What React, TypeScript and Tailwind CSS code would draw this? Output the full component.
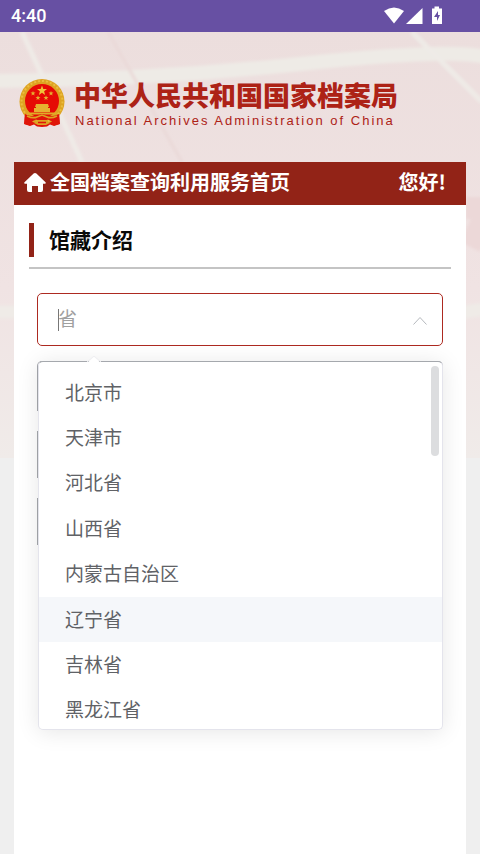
import { useState } from 'react'

const provinces = ['北京市', '天津市', '河北省', '山西省', '内蒙古自治区', '辽宁省', '吉林省', '黑龙江省']

function StatusBar() {
  return (
    <div className="flex h-8 items-center justify-between bg-[#6750a3] pl-[11px] pr-9 text-white">
      <span className="font-[Roboto] text-lg font-medium">4:40</span>
      <svg className="h-5 w-[60px]" viewBox="0 0 60 20" fill="currentColor" aria-hidden="true">
        <path d="M0 5Q10-2 20 5L10 17.500Z" />
        <path d="M38.500 2v16H22Z" />
        <path d="M50.500.500h4.500v2h3V18H48V2.500h2.500Z" />
        <path d="M54 5l-4 6h3v4l3-6h-2Z" fill="#6750a3" />
      </svg>
    </div>
  )
}

function Emblem() {
  return (
    <svg className="h-12 w-[46px] shrink-0" viewBox="0 0 46 48" aria-hidden="true">
      <path d="M6 34h34l1 11-6 2-4-1.500-3 2-5 .500-5-.500-3-2-4 1.500-6-2Z" fill="#e01509" />
      <circle cx="23" cy="22.500" r="22.500" fill="#dea322" />
      <circle cx="23" cy="22.500" r="20.500" fill="none" stroke="#ebbd3e" strokeWidth="2" strokeDasharray="2 2" />
      <circle cx="23" cy="22" r="17" fill="#e60a05" />
      <path d="m23 6.500 1.300 3.500H28l-2.900 2.300 1 3.700-3.100-2.200-3.100 2.200 1-3.700-2.900-2.300h3.700Z" fill="#f0c43a" />
      <g fill="#e6b030">
        <path d="m14 12 .7 1.600h1.800L15 14.800l.6 1.800-1.600-1-1.600 1 .6-1.800-1.500-1.200h1.800Z" />
        <path d="m32 12 .7 1.600h1.800L33 14.800l.6 1.800-1.600-1-1.600 1 .6-1.800-1.500-1.200h1.800Z" />
        <path d="m19 16.500.7 1.600h1.800L20 19.300l.6 1.800-1.600-1-1.600 1 .6-1.800-1.500-1.200h1.800Z" />
        <path d="m27 16.500.7 1.600h1.800L28 19.300l.6 1.800-1.600-1-1.600 1 .6-1.800-1.500-1.200h1.800Z" />
        <path d="M17 25h12l1 3h-1v1h2v4H15v-4h2v-1h-1Z" />
      </g>
      <path d="M8 33.500h30l-1 2H9Z" fill="#e0ac28" />
      <path d="M6 35q6 3 11 2l6-2 6 2q5 1 11-2l.5 10-5.500 1.500-2-4-4-2-6 2-6-2-4 2-2 4L5.500 45Z" fill="#e01509" />
      <path d="M8 37q6 3 10 1l5-2 5 2q4 2 10-1" fill="none" stroke="#dea322" strokeWidth="1.500" />
      <path d="m15 44 4-3h8l4 3-4 2h-8Z" fill="#dea322" />
      <path d="M19 43.500h8" stroke="#e01509" strokeWidth="1.500" />
    </svg>
  )
}

// faint window-frame pattern behind the header
function Backdrop() {
  return (
    <svg className="absolute inset-x-0 top-0 -z-10 h-[426px] w-full" viewBox="0 0 480 426" preserveAspectRatio="none" aria-hidden="true">
      <defs>
        <linearGradient id="sky" x1="0" y1="0" x2="0" y2="1">
          <stop offset="0" stopColor="#ecdedd" />
          <stop offset=".6" stopColor="#f0e3e3" />
          <stop offset="1" stopColor="#f0ebe9" />
        </linearGradient>
        <filter id="soft"><feGaussianBlur stdDeviation="1.500" /></filter>
      </defs>
      <path d="M0 0h480v426H0Z" fill="url(#sky)" />
      <g filter="url(#soft)" fill="none">
        <path d="M-5 49Q150 48 300 32T485 25" stroke="#eeebe6" strokeWidth="14" />
        <path d="m22 0 60 130M412 0l70 70" stroke="#efebe7" strokeWidth="5" />
        <path d="m108 0 74 130" stroke="#ead9d8" strokeWidth="3" />
        <path d="M466 176h20M470 215l14-30" stroke="#ecd8d8" strokeWidth="22" />
        <path d="M460 281l25-4M-5 280h22" stroke="#efebe7" strokeWidth="13" />
      </g>
    </svg>
  )
}

export default function App() {
  const [province, setProvince] = useState('')

  return (
    <div className="flex min-h-screen flex-col bg-[#efefef] font-['Noto_Sans_CJK_SC',sans-serif]">
      <StatusBar />
      <div className="relative isolate flex flex-1 flex-col">
        <Backdrop />
        <header className="flex h-[130px] items-center gap-2 pl-[19px] pt-3">
          <Emblem />
          <div className="pt-1 pl-px text-[#ad2216]">
            <h1 className="text-[27px] leading-8 font-black whitespace-nowrap">中华人民共和国国家档案局</h1>
            <p className="pl-px font-['Liberation_Sans',sans-serif] text-[13px] leading-5 tracking-[2px] whitespace-nowrap">
              National Archives Administration of China
            </p>
          </div>
        </header>

        <main className="mx-3.5 flex-1 bg-white">
          <nav className="flex h-[43px] items-center justify-between bg-[#922317] pl-2.5 pr-5 text-xl leading-6 font-bold text-white">
            <a href="#" className="flex items-center gap-1 pb-1">
              <svg className="mt-0.5 h-5 w-[22px]" viewBox="0 0 22 20" fill="currentColor" aria-hidden="true">
                <path d="M11 0a2 2 0 0 1 1.400.600L21.500 9.300q1 1.200-.7 1.500H19V17q0 2-2 2h-3v-6H8v6H5q-2 0-2-2v-6.200H1.200q-1.700-.3-.7-1.500L9.600.600A2 2 0 0 1 11 0Z" />
              </svg>
              全国档案查询利用服务首页
            </a>
            <span className="pb-1">您好!</span>
          </nav>

          <div className="mx-[15px] flex h-16 items-center gap-[15px] border-b-2 border-[#c4c4c4] pt-2">
            <span className="h-[34px] w-[5px] bg-[#922317]" />
            <h2 className="pb-0.5 text-[21px] leading-8 font-bold text-[#090909]">馆藏介绍</h2>
          </div>

          <div className="relative mx-[23px] mt-6">
            <input
              type="text"
              aria-label="省"
              placeholder="省"
              value={province}
              onChange={(e) => setProvince(e.target.value)}
              className="block h-[53px] w-full rounded-[5px] border border-[#ad2a21] bg-white pr-12 pb-1 pl-5 text-[19px] text-[#606266] outline-none placeholder:text-[#a0a0a0]"
            />
            <span className="absolute top-4 left-[21px] h-[22px] w-px bg-[#777]" />
            <svg className="absolute top-6 right-4 h-2 w-3.5" viewBox="0 0 14 8" fill="none" stroke="#b5b8bd" aria-hidden="true">
              <path d="m.5 7.500 6.500-7 6.500 7" />
            </svg>

            {/* fields under the open list */}
            <div className="mt-[15px] h-[50px] rounded-t-[5px] border border-b-0 border-[#a5a8ad]" />
            <div className="mt-5 h-[47px] border-l border-[#a5a8ad]" />
            <div className="mt-5 h-[47px] border-l border-[#a5a8ad]" />

            <div className="absolute inset-x-0 top-[68px] ml-px h-[369px] rounded-[5px] border border-[#e4e4ec] border-t-[#a5a8ad] bg-white shadow-[0_2px_22px_rgba(0,0,0,0.1)]">
              <svg className="absolute -top-1.5 left-12 h-2 w-3.5" viewBox="0 0 14 8" aria-hidden="true">
                <path d="m0 7 7-6 7 6v1H0Z" fill="#fff" />
                <path d="m0 6 7-6 7 6" fill="none" stroke="#eeeef2" />
              </svg>
              <div className="h-full overflow-hidden rounded-[5px] pt-2">
                <ul className="grid h-[363px] auto-rows-fr text-[19px] leading-7 text-[#606266]">
                  {provinces.map((name) => (
                    <li key={name} className={name === '辽宁省' ? 'grid bg-[#f5f7fa]' : 'grid'}>
                      <button type="button" onClick={() => setProvince(name)} className="pb-0.5 pl-[26px] text-left">
                        {name}
                      </button>
                    </li>
                  ))}
                </ul>
              </div>
              <span className="absolute top-1 right-[3px] h-[90px] w-2 rounded-full bg-[#dcdddf]" />
            </div>
          </div>
        </main>
      </div>
    </div>
  )
}
